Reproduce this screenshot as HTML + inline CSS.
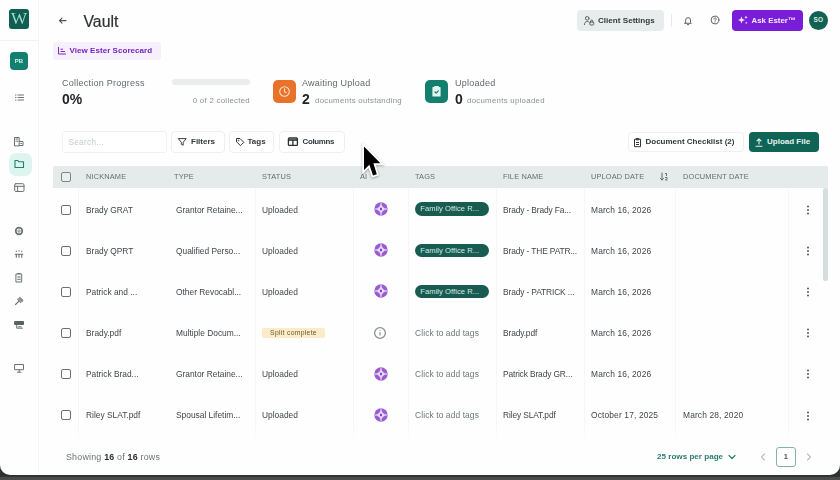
<!DOCTYPE html>
<html><head><meta charset="utf-8">
<style>
*{box-sizing:border-box;margin:0;padding:0}
html,body{width:840px;height:480px;overflow:hidden;background:linear-gradient(#2f3030 0,#2f3030 476.3px,#4a4b4b 477.6px,#4b4c4c 480px);font-family:"Liberation Sans",sans-serif;color:#2b2f31}
#win{filter:blur(.35px);position:absolute;left:0;top:0;width:840px;height:475.3px;background:#fefefe;border-radius:0 0 10px 10px;overflow:hidden}
.abs{position:absolute}
.t{position:absolute;white-space:nowrap;line-height:1}
#side{position:absolute;left:0;top:0;width:39px;height:475px;border-right:1px solid #f4f5f5}
.hd{font-size:7.4px;color:#656d6f;letter-spacing:.15px}
.c{font-size:8.4px;color:#41464a}
.btn{position:absolute;border:1px solid #eef0f0;border-radius:4px;background:#fff;height:22px;font-size:8.2px;font-weight:bold;color:#2f3436}
.cb{position:absolute;width:10px;height:10px;border:1.3px solid #6b7173;border-radius:2px;background:#fff}
.tag{position:absolute;left:415px;width:74px;height:13.5px;border-radius:7px;background:#185c51;color:#d6e8e3;font-size:7.6px;line-height:13.5px;padding-left:5.3px;letter-spacing:.05px;white-space:nowrap}
.vl{position:absolute;top:188px;height:250px;width:1px;background:#f5f6f6}
.split{left:262px;width:63px;height:10px;border-radius:2px;background:#faebc9}
.splitt{left:262px;width:63px;text-align:center;font-size:6.8px;letter-spacing:.3px;color:#6e5a2a}
.fn{letter-spacing:-.12px}
.dt{letter-spacing:.15px}
.cta{left:415px;font-size:8.4px;letter-spacing:.12px;color:#6e7678}
</style></head><body>
<div id="win">
<div id="side"></div>
<!-- logo -->
<div class="abs" style="left:9px;top:9px;width:20px;height:20px;border-radius:3px;background:#0f5e51"></div>
<div class="t" style="left:9px;top:10px;width:20px;text-align:center;font-family:'Liberation Serif',serif;font-size:17px;color:#9fdccd">W</div>
<div class="abs" style="left:0;top:40px;width:39px;height:1px;background:#f1f3f3"></div>
<div class="abs" style="left:10px;top:52px;width:18px;height:18px;border-radius:4px;background:#13806f"></div>
<div class="t" style="left:10px;top:58px;width:18px;text-align:center;font-size:6px;font-weight:bold;color:#d6f0ea">PB</div>
<div class="abs" style="left:8.500px;top:152.500px;width:23px;height:23.500px;border-radius:7px;background:#def4ef"></div>
<svg class="abs" style="left:0;top:0" width="40" height="473" fill="none" stroke="#6a7173" stroke-width="1" stroke-linecap="round" stroke-linejoin="round">
 <path d="M18 95h5.500M18 97.500h5.500M18 100h5.500M15.500 95h.5M15.500 97.500h.5M15.500 100h.5"/>
 <path d="M14.500 145.500v-8h4.700v8zM16 139h1.700M16 141.200h1.700M19.200 141.500h3.800v4h-3.800M20.800 143.500h.7"/>
 <path stroke="#1a8371" stroke-width="1.100" d="M15 160.500h2.800l1.100 1.300h4.600v5.700h-8.500z"/>
 <rect x="14.700" y="183.700" width="9.300" height="7.800" rx="1.200"/><path d="M14.700 186.300h9.300M17.600 186.300v5.200"/>
 <circle cx="19" cy="231" r="3.300" stroke-width="1.700"/>
 <path d="M17.200 231h3.600M19 229.200v3.600" stroke-width=".7"/>
 <path d="M16.300 251v.5M19 250.500v.5M21.700 251v.5M15.200 254.300h7.600M16.300 254.300v3M19 254.300v3M21.700 254.300v3" stroke-width="1.100"/>
 <path d="M16.300 274h5.400v8h-5.400zM17.800 273.500h2.400M17.700 277h2.600M17.700 279.300h2.600"/>
 <path d="M15.500 304.500l3.200-3.200M18.800 298.300l3.400 3.400M19.800 297.300l3 3M17.800 299.300l3 3" stroke-width="1.100"/>
 <path d="M15 321.500h8.500v3h-8.500z" fill="#5a6163" stroke="#5a6163"/><path d="M16.700 325v3.200h5.800M18.200 326.800h3" stroke-width="1"/>
 <path d="M15 364.500h8.500v5.200h-8.500zM19.200 369.700v2.300M17.300 372.200h3.800"/>
</svg>

<!-- header -->
<svg class="abs" style="left:57px;top:15px" width="12" height="11" fill="none" stroke="#4a5052" stroke-width="1.1" stroke-linecap="round" stroke-linejoin="round"><path d="M9 5.6h-6.4M5 3.1L2.5 5.6 5 8.100"/></svg>
<div class="t" style="left:83.5px;top:14px;font-size:15.8px;color:#2d3133;-webkit-text-stroke:.2px #2d3133">Vault</div>

<div class="abs" style="left:577px;top:10px;width:87px;height:21px;border-radius:4px;background:#e9ecec"></div>
<svg class="abs" style="left:583px;top:14.5px" width="14" height="13" fill="none" stroke="#555c5e" stroke-width=".95" stroke-linecap="round"><circle cx="4.200" cy="3.300" r="1.800"/><path d="M1.400 9.600c0-2 1.300-3.200 2.800-3.200.9 0 1.500.3 2 .7"/><rect x="6.800" y="7" width="3.900" height="3" rx=".7"/><path d="M7.700 7v-.9a1.050 1.050 0 012.100 0v.9"/></svg>
<div class="t" style="left:598px;top:16.5px;font-size:8.1px;font-weight:bold;color:#32383a">Client Settings</div>
<div class="abs" style="left:671px;top:14px;width:1px;height:13px;background:#e7eaea"></div>
<svg class="abs" style="left:682px;top:14px" width="12" height="13" fill="none" stroke="#555c5e" stroke-width=".95" stroke-linecap="round" stroke-linejoin="round"><path d="M3.700 8.400V6a2.400 2.400 0 014.800 0v2.400l.8.900H2.900zM5.400 10.600h1.400"/></svg>
<svg class="abs" style="left:709px;top:14.3px" width="12" height="12" fill="none" stroke="#555c5e" stroke-width=".95" stroke-linecap="round"><circle cx="6" cy="6" r="3.900"/><path d="M4.900 5a1.150 1.150 0 111.800.9c-.45.3-.7.500-.7 1M6 8.100v.1"/></svg>
<div class="abs" style="left:732px;top:10px;width:71px;height:21px;border-radius:4px;background:#7a1dd8"></div>
<svg class="abs" style="left:737px;top:14px" width="12" height="12" fill="#f1e4ff"><path d="M4.5 2.5l1 2.5 2.5 1-2.5 1-1 2.5-1-2.5-2.5-1 2.5-1zM9 1.5l.5 1.2 1.2.5-1.2.5L9 4.9l-.5-1.2-1.2-.5 1.2-.5zM9.2 7.5l.4 1 1 .4-1 .4-.4 1-.4-1-1-.4 1-.4z"/></svg>
<div class="t" style="left:751.5px;top:16.5px;font-size:7.9px;font-weight:bold;color:#f4eaff">Ask Ester™</div>
<div class="abs" style="left:809px;top:11px;width:18.5px;height:18.5px;border-radius:9.5px;background:#136152"></div>
<div class="t" style="left:809px;top:17px;width:18.5px;text-align:center;font-size:6.5px;font-weight:bold;color:#d8efe8">SO</div>

<!-- scorecard -->
<div class="abs" style="left:53px;top:42px;width:108px;height:18px;border-radius:3px;background:#f6f0fc"></div>
<svg class="abs" style="left:57px;top:46px" width="10" height="10" fill="none" stroke="#7b2cc9" stroke-width="1"><path d="M1.5 1v7h7.5M3.5 3.2h2.5M3.5 5.5h4.5"/></svg>
<div class="t" style="left:69.5px;top:47px;font-size:8px;font-weight:bold;color:#7427c2;letter-spacing:.05px">View Ester Scorecard</div>

<!-- stats -->
<div class="t" style="left:62px;top:78.5px;font-size:9px;color:#626a6c;letter-spacing:.25px">Collection Progress</div>
<div class="t" style="left:62px;top:92px;font-size:14px;font-weight:bold;color:#1f2325">0%</div>
<div class="abs" style="left:172px;top:79px;width:78px;height:6px;border-radius:3px;background:#ebeded"></div>
<div class="t" style="left:150px;width:100px;text-align:right;top:96.5px;font-size:7.8px;color:#8a9193;letter-spacing:.3px">0 of 2 collected</div>

<div class="abs" style="left:273px;top:80px;width:22.5px;height:22.5px;border-radius:5px;background:#e8722a"></div>
<svg class="abs" style="left:276.7px;top:83.7px" width="15" height="15" fill="none" stroke="#ffe1cd" stroke-width="1.1" stroke-linecap="round"><circle cx="7.5" cy="7.5" r="4.8"/><path d="M7.5 4.8v2.9l1.7 1"/></svg>
<div class="t" style="left:302px;top:78.5px;font-size:9px;color:#626a6c;letter-spacing:.25px">Awaiting Upload</div>
<div class="t" style="left:302px;top:92px;font-size:14px;font-weight:bold;color:#1f2325">2</div>
<div class="t" style="left:315px;top:96.5px;font-size:7.8px;color:#8a9193;letter-spacing:.3px">documents outstanding</div>

<div class="abs" style="left:425px;top:80px;width:22.5px;height:22.5px;border-radius:5px;background:#13806f"></div>
<svg class="abs" style="left:428.7px;top:83.7px" width="15" height="15" fill="none" stroke="#e0f5ef" stroke-width="1.2" stroke-linecap="round" stroke-linejoin="round"><path d="M4 3.5h7v8.5h-7z" fill="#e0f5ef"/><path d="M6 3h3" stroke-width="2"/><path d="M6 8l1.2 1.2 2-2.4" stroke="#13806f"/></svg>
<div class="t" style="left:455px;top:78.5px;font-size:9px;color:#626a6c;letter-spacing:.25px">Uploaded</div>
<div class="t" style="left:455px;top:92px;font-size:14px;font-weight:bold;color:#1f2325">0</div>
<div class="t" style="left:467px;top:96.5px;font-size:7.8px;color:#8a9193;letter-spacing:.3px">documents uploaded</div>

<!-- toolbar -->
<div class="abs" style="left:62px;top:131px;width:105px;height:22px;border:1px solid #f0f2f2;border-radius:3px;background:#fff"></div>
<div class="t" style="left:68.5px;top:138.5px;font-size:8.2px;color:#c6cbcc;letter-spacing:.3px">Search...</div>
<div class="btn" style="left:171px;top:131px;width:54px"></div>
<svg class="abs" style="left:177px;top:137px" width="11" height="10" fill="none" stroke="#3a4042" stroke-width="1" stroke-linejoin="round"><path d="M1.300 1.600h7.900L6.200 5.300v2.900L4.300 7.300V5.300z"/></svg>
<div class="t" style="left:191px;top:138px;font-size:8px;font-weight:bold;color:#32383a">Filters</div>
<div class="btn" style="left:229px;top:131px;width:45px"></div>
<svg class="abs" style="left:235px;top:137px" width="10" height="10" fill="none" stroke="#32383a" stroke-width="1" stroke-linejoin="round"><path d="M1.5 1.5h3.5l3.8 3.8-3.3 3.3L1.5 4.8z"/><circle cx="3.5" cy="3.5" r=".4"/></svg>
<div class="t" style="left:247.5px;top:138px;font-size:8px;font-weight:bold;color:#32383a">Tags</div>
<div class="btn" style="left:279px;top:131px;width:66px"></div>
<svg class="abs" style="left:287px;top:137px" width="12" height="10" fill="none" stroke="#2a2f31" stroke-width="1.300" stroke-linejoin="round"><rect x="1.400" y="1" width="9" height="7.400" rx="1"/><path d="M1.400 3h9" stroke-width="1.600"/><path d="M5.900 3v5.400"/></svg>
<div class="t" style="left:302.5px;top:138px;font-size:7.9px;letter-spacing:-.3px;font-weight:bold;color:#32383a">Columns</div>

<div class="btn" style="left:628px;top:132px;width:116px;height:20px"></div>
<svg class="abs" style="left:633px;top:136.5px" width="9" height="11" fill="none" stroke="#32383a" stroke-width="1" stroke-linejoin="round"><path d="M1.5 2.2h6v7.5h-6zM3.2 1.5h2.6v1.4H3.2zM3 5.5h3M3 7.5h3"/></svg>
<div class="t" style="left:645.5px;top:138px;font-size:8px;font-weight:bold;color:#32383a">Document Checklist (2)</div>
<div class="abs" style="left:749px;top:132px;width:69.5px;height:19.5px;border-radius:4px;background:#0f6455"></div>
<svg class="abs" style="left:754px;top:136.5px" width="10" height="11" fill="none" stroke="#e3f3ee" stroke-width="1.1" stroke-linecap="round" stroke-linejoin="round"><path d="M5 7V2M3 3.8l2-2 2 2M2 9.2h6"/></svg>
<div class="t" style="left:767px;top:138px;font-size:8px;font-weight:bold;color:#e6f4f0">Upload File</div>

<!-- table header -->
<div class="abs" style="left:53px;top:166px;width:775px;height:21.5px;border-radius:1.5px 1.5px 0 0;background:#e5ebeb"></div>
<div class="cb" style="left:60.5px;top:172px;background:#e9eeee;border-color:#7f8688"></div>
<div class="t hd" style="left:86px;top:173px">NICKNAME</div>
<div class="t hd" style="left:174px;top:173px">TYPE</div>
<div class="t hd" style="left:262px;top:173px">STATUS</div>
<div class="t hd" style="left:360px;top:173px">AI</div>
<div class="t hd" style="left:415px;top:173px">TAGS</div>
<div class="t hd" style="left:503px;top:173px">FILE NAME</div>
<div class="t hd" style="left:591px;top:173px">UPLOAD DATE</div>
<svg class="abs" style="left:659px;top:171px" width="10" height="11" fill="none" stroke="#5d6668" stroke-width="1" stroke-linecap="round" stroke-linejoin="round"><path d="M3 2v7M1.5 7.5L3 9l1.5-1.5M6.5 2.5h1v2M6.5 6.5h1.5v1l-1.5 1.5h1.5"/></svg>
<div class="t hd" style="left:683px;top:173px">DOCUMENT DATE</div>

<div class="vl" style="left:78px"></div><div class="vl" style="left:254.5px"></div><div class="vl" style="left:352.5px"></div><div class="vl" style="left:408px"></div><div class="vl" style="left:496px"></div><div class="vl" style="left:584px"></div><div class="vl" style="left:675px"></div><div class="vl" style="left:788px"></div>
<div class="abs" style="left:823px;top:188px;width:4.5px;height:93px;border-radius:2px;background:#d5dede"></div>

<div class="cb" style="left:60.5px;top:204.8px"></div>
<div class="t c" style="left:86px;top:205.8px">Brady GRAT</div>
<div class="t c" style="left:176px;top:205.8px">Grantor Retaine...</div>
<div class="t c" style="left:262px;top:205.8px">Uploaded</div>
<svg class="abs" style="left:373.6px;top:202.1px" width="14" height="14"><circle cx="7" cy="7" r="6.7" fill="#9a5cd1"/><path d="M7 .5Q7.300 6.700 13.500 7Q7.300 7.300 7 13.500Q6.700 7.300 .5 7Q6.700 6.700 7 .5Z" fill="#ecdcfa" stroke="#ecdcfa" stroke-width=".45"/><path d="M7 5.200L8.100 7L7 8.800L5.900 7Z" fill="#5d20ad"/></svg>
<div class="tag" style="top:202.4px">Family Office R...</div>
<div class="t c fn" style="left:503px;top:205.8px">Brady - Brady Fa...</div>
<div class="t c dt" style="left:591px;top:205.8px">March 16, 2026</div>
<svg class="abs" style="left:805.8px;top:205px" width="4" height="10" fill="#555c5e"><circle cx="2" cy="1.500" r="1"/><circle cx="2" cy="5" r="1"/><circle cx="2" cy="8.500" r="1"/></svg>
<div class="cb" style="left:60.5px;top:245.9px"></div>
<div class="t c" style="left:86px;top:246.8px">Brady QPRT</div>
<div class="t c" style="left:176px;top:246.8px">Qualified Perso...</div>
<div class="t c" style="left:262px;top:246.8px">Uploaded</div>
<svg class="abs" style="left:373.6px;top:243.2px" width="14" height="14"><circle cx="7" cy="7" r="6.7" fill="#9a5cd1"/><path d="M7 .5Q7.300 6.700 13.500 7Q7.300 7.300 7 13.500Q6.700 7.300 .5 7Q6.700 6.700 7 .5Z" fill="#ecdcfa" stroke="#ecdcfa" stroke-width=".45"/><path d="M7 5.200L8.100 7L7 8.800L5.900 7Z" fill="#5d20ad"/></svg>
<div class="tag" style="top:243.5px">Family Office R...</div>
<div class="t c fn" style="left:503px;top:246.8px">Brady - THE PATR...</div>
<div class="t c dt" style="left:591px;top:246.8px">March 16, 2026</div>
<svg class="abs" style="left:805.8px;top:246.1px" width="4" height="10" fill="#555c5e"><circle cx="2" cy="1.500" r="1"/><circle cx="2" cy="5" r="1"/><circle cx="2" cy="8.500" r="1"/></svg>
<div class="cb" style="left:60.5px;top:287px"></div>
<div class="t c" style="left:86px;top:287.8px">Patrick and ...</div>
<div class="t c" style="left:176px;top:287.8px">Other Revocabl...</div>
<div class="t c" style="left:262px;top:287.8px">Uploaded</div>
<svg class="abs" style="left:373.6px;top:284.3px" width="14" height="14"><circle cx="7" cy="7" r="6.7" fill="#9a5cd1"/><path d="M7 .5Q7.300 6.700 13.500 7Q7.300 7.300 7 13.500Q6.700 7.300 .5 7Q6.700 6.700 7 .5Z" fill="#ecdcfa" stroke="#ecdcfa" stroke-width=".45"/><path d="M7 5.200L8.100 7L7 8.800L5.900 7Z" fill="#5d20ad"/></svg>
<div class="tag" style="top:284.6px">Family Office R...</div>
<div class="t c fn" style="left:503px;top:287.8px">Brady - PATRICK ...</div>
<div class="t c dt" style="left:591px;top:287.8px">March 16, 2026</div>
<svg class="abs" style="left:805.8px;top:287.2px" width="4" height="10" fill="#555c5e"><circle cx="2" cy="1.500" r="1"/><circle cx="2" cy="5" r="1"/><circle cx="2" cy="8.500" r="1"/></svg>
<div class="cb" style="left:60.5px;top:328.1px"></div>
<div class="t c" style="left:86px;top:328.8px">Brady.pdf</div>
<div class="t c" style="left:176px;top:328.8px">Multiple Docum...</div>
<div class="abs split" style="top:327.8px"></div><div class="t splitt" style="top:329.7px">Split complete</div>
<svg class="abs" style="left:373px;top:326.3px" width="14" height="14" fill="none" stroke="#8b9192" stroke-width="1.3"><circle cx="7" cy="7" r="5.4"/><path d="M7 6.300v3.200M7 4.300v.6" stroke-width="1.200"/></svg>
<div class="t cta" style="top:328.8px">Click to add tags</div>
<div class="t c fn" style="left:503px;top:328.8px">Brady.pdf</div>
<div class="t c dt" style="left:591px;top:328.8px">March 16, 2026</div>
<svg class="abs" style="left:805.8px;top:328.3px" width="4" height="10" fill="#555c5e"><circle cx="2" cy="1.500" r="1"/><circle cx="2" cy="5" r="1"/><circle cx="2" cy="8.500" r="1"/></svg>
<div class="cb" style="left:60.5px;top:369.2px"></div>
<div class="t c" style="left:86px;top:369.8px">Patrick Brad...</div>
<div class="t c" style="left:176px;top:369.8px">Grantor Retaine...</div>
<div class="t c" style="left:262px;top:369.8px">Uploaded</div>
<svg class="abs" style="left:373.6px;top:366.5px" width="14" height="14"><circle cx="7" cy="7" r="6.7" fill="#9a5cd1"/><path d="M7 .5Q7.300 6.700 13.500 7Q7.300 7.300 7 13.500Q6.700 7.300 .5 7Q6.700 6.700 7 .5Z" fill="#ecdcfa" stroke="#ecdcfa" stroke-width=".45"/><path d="M7 5.200L8.100 7L7 8.800L5.900 7Z" fill="#5d20ad"/></svg>
<div class="t cta" style="top:369.8px">Click to add tags</div>
<div class="t c fn" style="left:503px;top:369.8px">Patrick Brady GR...</div>
<div class="t c dt" style="left:591px;top:369.8px">March 16, 2026</div>
<svg class="abs" style="left:805.8px;top:369.4px" width="4" height="10" fill="#555c5e"><circle cx="2" cy="1.500" r="1"/><circle cx="2" cy="5" r="1"/><circle cx="2" cy="8.500" r="1"/></svg>
<div class="cb" style="left:60.5px;top:410.3px"></div>
<div class="t c" style="left:86px;top:410.8px">Riley SLAT.pdf</div>
<div class="t c" style="left:176px;top:410.8px">Spousal Lifetim...</div>
<div class="t c" style="left:262px;top:410.8px">Uploaded</div>
<svg class="abs" style="left:373.6px;top:407.6px" width="14" height="14"><circle cx="7" cy="7" r="6.7" fill="#9a5cd1"/><path d="M7 .5Q7.300 6.700 13.500 7Q7.300 7.300 7 13.500Q6.700 7.300 .5 7Q6.700 6.700 7 .5Z" fill="#ecdcfa" stroke="#ecdcfa" stroke-width=".45"/><path d="M7 5.200L8.100 7L7 8.800L5.900 7Z" fill="#5d20ad"/></svg>
<div class="t cta" style="top:410.8px">Click to add tags</div>
<div class="t c fn" style="left:503px;top:410.8px">Riley SLAT.pdf</div>
<div class="t c dt" style="left:591px;top:410.8px">October 17, 2025</div>
<div class="t c dt" style="left:683px;top:410.8px">March 28, 2020</div>
<svg class="abs" style="left:805.8px;top:410.5px" width="4" height="10" fill="#555c5e"><circle cx="2" cy="1.500" r="1"/><circle cx="2" cy="5" r="1"/><circle cx="2" cy="8.500" r="1"/></svg>

<!-- fade -->
<div class="abs" style="left:40px;top:428px;width:800px;height:12px;background:linear-gradient(rgba(254,254,254,0),#fefefe)"></div>

<!-- footer -->
<div class="t" style="left:66px;top:452.5px;font-size:8.9px;letter-spacing:.2px;color:#6a7274">Showing <b style="color:#2b2f31">16</b> of <b style="color:#2b2f31">16</b> rows</div>
<div class="t" style="left:657px;top:453px;font-size:8.1px;font-weight:bold;color:#2c7d6e">25 rows per page</div>
<svg class="abs" style="left:727px;top:453px" width="10" height="8" fill="none" stroke="#2c7d6e" stroke-width="1.2" stroke-linecap="round" stroke-linejoin="round"><path d="M2 2.5l3 3 3-3"/></svg>
<svg class="abs" style="left:759px;top:452px" width="8" height="10" fill="none" stroke="#b9bfc0" stroke-width="1.1" stroke-linecap="round" stroke-linejoin="round"><path d="M5.5 2L2.5 5l3 3"/></svg>
<div class="abs" style="left:776px;top:446.5px;width:19.5px;height:20px;border:1px solid #86b2a9;border-radius:3px;background:#fff"></div>
<div class="t" style="left:776px;top:452.8px;width:19.5px;text-align:center;font-size:7.5px;font-weight:bold;color:#4a5254">1</div>
<svg class="abs" style="left:805px;top:452px" width="8" height="10" fill="none" stroke="#b9bfc0" stroke-width="1.1" stroke-linecap="round" stroke-linejoin="round"><path d="M2.5 2l3 3-3 3"/></svg>

<!-- cursor -->
<svg class="abs" style="left:0;top:0;filter:drop-shadow(0 1px 1px rgba(0,0,0,.35))" width="840" height="473"><path d="M364 146.4V170L369.4 164.700L373 175.500L376.800 174.200L373.400 163.300H380.400Z" fill="#000" stroke="#fff" stroke-width="3.5" paint-order="stroke" stroke-linejoin="miter"/></svg>
</div>
</body></html>
